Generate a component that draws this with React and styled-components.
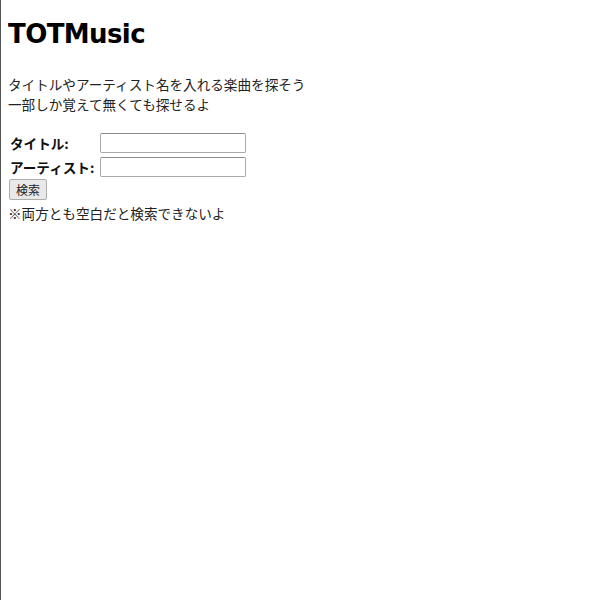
import React, { useState } from "react";
import styled, { createGlobalStyle } from "styled-components";

const Global = createGlobalStyle`
  html {
    border-left: 1px solid #555;
    min-height: 100%;
    box-sizing: border-box;
    background: #fff;
  }
  body {
    margin: 8px 8px 8px 7px;
    font-family: "DejaVu Sans", "Noto Sans CJK JP", sans-serif;
    font-size: 13.6px;
    color: #222;
  }
`

const Title = styled.h1`
  font-size: 26px;
  font-weight: bold;
  line-height: 36px;
  margin: 8px 0 22px 0;
  color: #000;
  letter-spacing: -0.6px;
`

const Lead = styled.p`
  margin: 0 0 16px 0;
  line-height: 20px;
  font-family: "Noto Sans CJK JP", sans-serif;
`

const FormTable = styled.table`
  border-spacing: 2px;
  margin-left: -1px;
`

const Label = styled.th`
  width: 86px;
  padding: 1px;
  text-align: left;
  white-space: nowrap;
  font-family: "Noto Sans CJK JP", sans-serif;
  font-size: 13.6px;
  font-weight: bold;
  color: #111;
  line-height: 20px;
`

const Cell = styled.td`
  padding: 1px;
  line-height: 20px;
`

const Field = styled.input`
  display: block;
  width: 146px;
  height: 20px;
  box-sizing: border-box;
  border: 1px solid #a9a9a9;
  border-top-color: #8a8a8a;
  border-radius: 2px;
  padding: 1px 2px;
  font-size: 13px;
`

const SearchButton = styled.button`
  display: block;
  margin: -1px 0 0 1px;
  width: 38px;
  height: 21px;
  padding: 0;
  font-family: "Noto Sans CJK JP", sans-serif;
  font-size: 12px;
  color: #222;
  background: #e9e9e9;
  border: 1px solid #adadad;
  border-radius: 2px;
`

const Note = styled.p`
  margin: 3px 0 0 0;
  line-height: 20px;
  font-family: "Noto Sans CJK JP", sans-serif;
`

function App() {
  const [title, setTitle] = useState("");
  const [artist, setArtist] = useState("");

  return (
    <>
      <Global />
      <Title>TOTMusic</Title>
      <Lead>
        タイトルやアーティスト名を入れる楽曲を探そう
        <br />
        一部しか覚えて無くても探せるよ
      </Lead>
      <form onSubmit={(e) => e.preventDefault()}>
        <FormTable>
          <tbody>
            <tr>
              <Label>タイトル:</Label>
              <Cell>
                <Field value={title} onChange={(e) => setTitle(e.target.value)} />
              </Cell>
            </tr>
            <tr>
              <Label>アーティスト:</Label>
              <Cell>
                <Field value={artist} onChange={(e) => setArtist(e.target.value)} />
              </Cell>
            </tr>
          </tbody>
        </FormTable>
        <SearchButton type="submit">検索</SearchButton>
      </form>
      <Note>※両方とも空白だと検索できないよ</Note>
    </>
  );
}

export default App;
